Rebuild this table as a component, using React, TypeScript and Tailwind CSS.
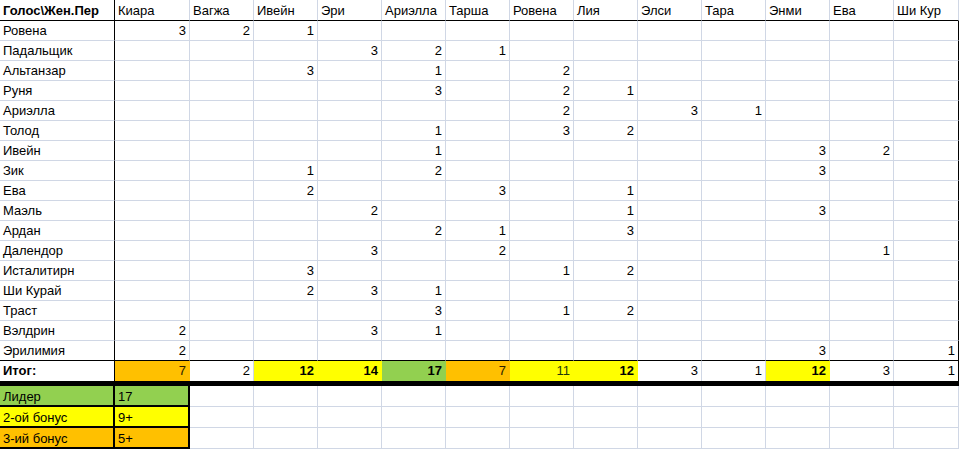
import clsx from 'clsx';

const cols = ['Киара', 'Вагжа', 'Ивейн', 'Эри', 'Ариэлла', 'Тарша', 'Ровена', 'Лия', 'Элси', 'Тара', 'Энми', 'Ева', 'Ши Кур'];

const rows: [string, Record<number, number>][] = [
  ['Ровена', { 0: 3, 1: 2, 2: 1 }],
  ['Падальщик', { 3: 3, 4: 2, 5: 1 }],
  ['Альтанзар', { 2: 3, 4: 1, 6: 2 }],
  ['Руня', { 4: 3, 6: 2, 7: 1 }],
  ['Ариэлла', { 6: 2, 8: 3, 9: 1 }],
  ['Толод', { 4: 1, 6: 3, 7: 2 }],
  ['Ивейн', { 4: 1, 10: 3, 11: 2 }],
  ['Зик', { 2: 1, 4: 2, 10: 3 }],
  ['Ева', { 2: 2, 5: 3, 7: 1 }],
  ['Маэль', { 3: 2, 7: 1, 10: 3 }],
  ['Ардан', { 4: 2, 5: 1, 7: 3 }],
  ['Далендор', { 3: 3, 5: 2, 11: 1 }],
  ['Исталитирн', { 2: 3, 6: 1, 7: 2 }],
  ['Ши Курай', { 2: 2, 3: 3, 4: 1 }],
  ['Траст', { 4: 3, 6: 1, 7: 2 }],
  ['Вэлдрин', { 0: 2, 3: 3, 4: 1 }],
  ['Эрилимия', { 0: 2, 10: 3, 12: 1 }],
];

// оформление итоговой строки
const totalStyle: Record<number, string> = {
  0: 'bg-[#ffc000] border-r-[#ffc000] text-[#2a1e00]',
  2: 'bg-[#ffff00] border-r-[#ffff00] font-bold',
  3: 'bg-[#ffff00] border-r-[#ffff00] font-bold',
  4: 'bg-[#92d050] border-r-[#92d050] font-bold',
  5: 'bg-[#ffc000] border-r-[#ffc000] text-[#2a1e00]',
  6: 'bg-[#ffff00] border-r-[#ffff00] text-[#1f3a0c]',
  7: 'bg-[#ffff00] border-r-[#ffff00] font-bold',
  10: 'bg-[#ffff00] border-r-[#ffff00] font-bold',
};

const legend = [
  { label: 'Лидер', value: '17', bg: 'bg-[#92d050]' },
  { label: '2-ой бонус', value: '9+', bg: 'bg-[#ffff00]' },
  { label: '3-ий бонус', value: '5+', bg: 'bg-[#ffc000]' },
];

const gridCols = 'grid grid-cols-[115px_75px_repeat(11,64px)_65px]';

export default function App() {
  const totals = cols.map((_, c) => rows.reduce((sum, [, v]) => sum + (v[c] ?? 0), 0));

  return (
    <div className="h-[449px] w-[959px] overflow-hidden bg-white font-['Liberation_Sans',Arial,sans-serif] text-[13px] leading-[19px] text-black">
      <div className={gridCols}>
        {/* шапка */}
        <div className="h-[21px] border-b border-r border-b-black border-r-black pl-[3px] pt-[1px] font-bold">
          Голос\Жен.Пер
        </div>
        {cols.map((name) => (
          <div
            key={name}
            className="h-[21px] border-b border-r border-b-black border-r-[#d0d7e5] pl-[3px] pt-[1px]"
          >
            {name}
          </div>
        ))}

        {rows.map(([name, vals], r) => {
          const last = r === rows.length - 1;
          return (
            <div key={name} className="contents">
              <div
                className={clsx(
                  'h-[20px] border-b border-r border-r-black pl-[3px]',
                  last ? 'border-b-black' : 'border-b-[#d0d7e5]'
                )}
              >
                {name}
              </div>
              {cols.map((c, i) => (
                <div
                  key={c}
                  className={clsx(
                    'h-[20px] border-b border-r pr-[3px] text-right',
                    last ? 'border-b-black' : 'border-b-[#d0d7e5]',
                    i === cols.length - 1 ? 'border-r-black' : 'border-r-[#d0d7e5]'
                  )}
                >
                  {vals[i] ?? ''}
                </div>
              ))}
            </div>
          );
        })}

        {/* итог */}
        <div className="h-[20px] border-r border-r-black pl-[3px] font-bold">Итог:</div>
        {totals.map((t, i) => (
          <div
            key={cols[i]}
            className={clsx(
              'h-[20px] border-r pr-[3px] text-right',
              i === cols.length - 1 ? 'border-r-black' : (totalStyle[i] ?? 'border-r-[#d0d7e5]')
            )}
          >
            {t}
          </div>
        ))}
      </div>

      <div className="h-[5px] bg-black" />

      <div className={gridCols}>
        {legend.map((l) => (
          <div key={l.label} className="contents">
            <div className={clsx('h-[21px] border-b-2 border-r-2 border-black pl-[3px] pt-[1px]', l.bg)}>
              {l.label}
            </div>
            <div className={clsx('h-[21px] border-b-2 border-r-2 border-black pl-[3px] pt-[1px]', l.bg)}>
              {l.value}
            </div>
            {cols.slice(1).map((c) => (
              <div key={c} className="h-[21px] border-b border-r border-[#d0d7e5]" />
            ))}
          </div>
        ))}
      </div>
    </div>
  );
}
